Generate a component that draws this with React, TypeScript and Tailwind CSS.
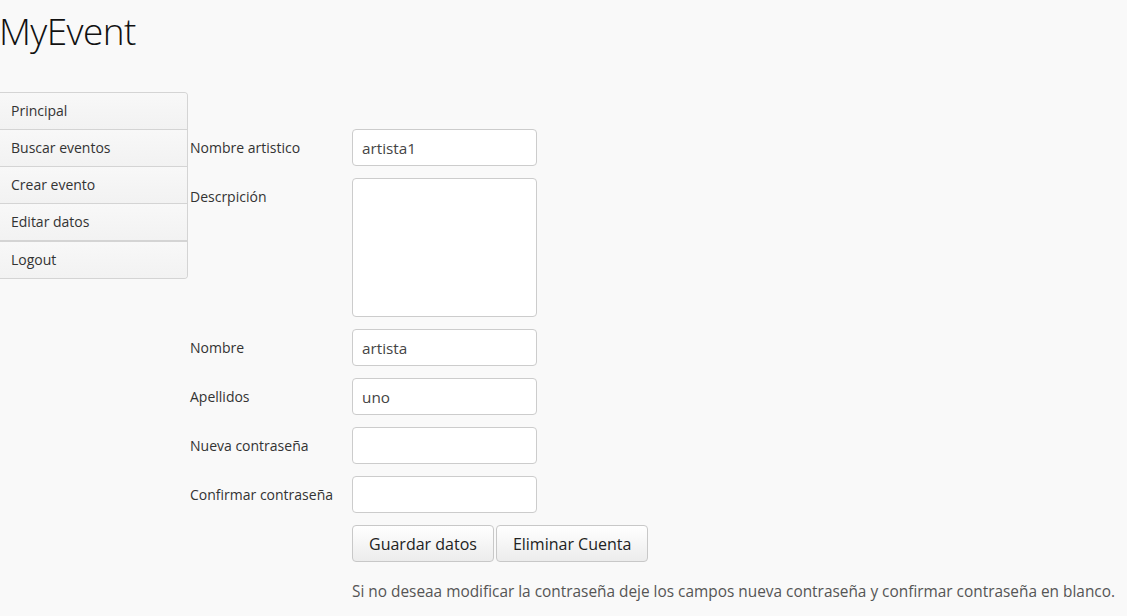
import { useState } from 'react';

const menu = ['Principal', 'Buscar eventos', 'Crear evento', 'Editar datos'];

const Field = ({ label, value }: { label: string; value: string }) => (
  <>
    <label className="pt-[9px] text-[14px] leading-5 text-[#333]">{label}</label>
    <input
      defaultValue={value}
      className="h-[37px] w-[185px] rounded-[4px] border border-[#ccc] bg-white px-[9px] text-[15.3px] text-[#444] outline-none"
    />
  </>
);

export default function App() {
  const [desc, setDesc] = useState('');

  return (
    <div className="min-h-[616px] bg-[#f9f9f9] font-['Open_Sans',sans-serif] text-[#333]">
      <h1 className="-ml-[1px] pt-[9px] text-[37px] leading-[44px] font-light tracking-[-0.6px] text-[#111]">MyEvent</h1>

      <div className="mt-[39px] flex items-start">
        {/* Side menu */}
        <nav className="w-[188px] overflow-hidden rounded-r-[4px] border border-l-0 border-[#d4d4d4] bg-[#f4f4f4]">
          {menu.map((item) => (
            <a
              key={item}
              className="block h-[37px] border-b border-[#d4d4d4] bg-gradient-to-b from-[#f8f8f8] to-[#f2f2f2] pl-[11px] text-[14px] leading-[36px] text-[#333]"
            >
              {item}
            </a>
          ))}
          <a className="block h-[37px] border-t border-[#d4d4d4] bg-gradient-to-b from-[#f8f8f8] to-[#f2f2f2] pl-[11px] text-[14px] leading-[36px] text-[#333]">
            Logout
          </a>
        </nav>

        {/* Edit form */}
        <div className="ml-[2px] pt-[37px]">
          <div className="grid grid-cols-[162px_185px] gap-y-[12px]">
            <Field label="Nombre artistico" value="artista1" />
            <label className="pt-[9px] text-[14px] leading-5 text-[#333]">Descrpición</label>
            <textarea
              value={desc}
              onChange={(e) => setDesc(e.target.value)}
              className="h-[139px] w-[185px] resize-none rounded-[4px] border border-[#ccc] bg-white px-[9px] py-2 text-[15px] text-[#444] outline-none"
            />
            <Field label="Nombre" value="artista" />
            <Field label="Apellidos" value="uno" />
            <Field label="Nueva contraseña" value="" />
            <Field label="Confirmar contraseña" value="" />
            <div />
            <div className="flex gap-[2px]">
              <button className="h-[37px] whitespace-nowrap rounded-[4px] border border-[#c8c8c8] bg-gradient-to-b from-white to-[#ececec] px-4 text-[16px] text-[#222]">
                Guardar datos
              </button>
              <button className="h-[37px] whitespace-nowrap rounded-[4px] border border-[#c8c8c8] bg-gradient-to-b from-white to-[#ececec] px-4 text-[16px] text-[#222]">
                Eliminar Cuenta
              </button>
            </div>
          </div>
          <p className="ml-[162px] mt-[19px] whitespace-nowrap text-[15.4px] leading-[22px] text-[#555]">
            Si no deseaa modificar la contraseña deje los campos nueva contraseña y confirmar contraseña en blanco.
          </p>
        </div>
      </div>
    </div>
  );
}
